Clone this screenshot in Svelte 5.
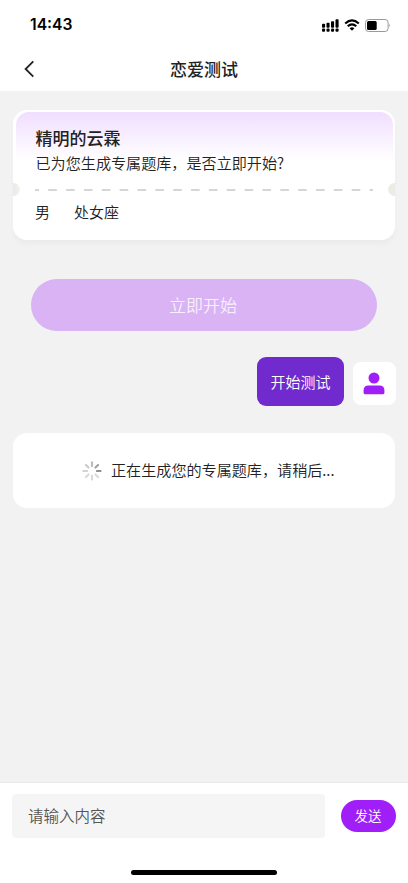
<script lang="ts">
  const title = '恋爱测试'
  const profile = { name: '精明的云霖', gender: '男', sign: '处女座' }
  const ticks = [0.3, 0.42, 0.5, 0.17, 0.17, 0.17, 0.2, 0.24]
  const bars = [4, 5, 6.5, 8.5]
  let message = $state('')
</script>

<div class="page">
  <header>
    <div class="status">
      <span class="time">14:43</span>
      <div class="indicators">
        <svg width="17" height="13" viewBox="0 0 17 13">
          {#each bars as bar, i}
            <rect x={i * 4.5} y={8.7 - bar} width="3.1" height={bar} rx=".9" />
            <rect x={i * 4.5} y="9.6" width="3.1" height="3.1" rx="1" />
          {/each}
        </svg>
        <svg class="wifi" width="16" height="12" viewBox="0 0 16 12">
          <path d="M1.2 4.5Q8 -1.6 14.8 4.5M3.7 7.3Q8 3.5 12.3 7.3" fill="none" stroke="#000" stroke-width="2.1" />
          <path d="M5.6 9.3Q8 7.4 10.4 9.3L8 11.7Z" />
        </svg>
        <svg class="battery" width="26" height="13" viewBox="0 0 26 13">
          <rect x=".5" y=".5" width="22.6" height="12" rx="3" fill="none" stroke="#999" />
          <rect x="2" y="2" width="9.7" height="9" rx="1.5" />
          <path d="M24.2 4.6Q25.8 6.5 24.2 8.4Z" fill="#999" />
        </svg>
      </div>
    </div>
    <nav>
      <button class="back" aria-label="返回">
        <svg width="10" height="18" viewBox="0 0 10 18">
          <path d="M9.3 1.3L1.6 9L9.3 16.7" fill="none" stroke="#222" stroke-width="1.8" />
        </svg>
      </button>
      <h1>{title}</h1>
    </nav>
  </header>

  <main>
    <section class="card">
      <div class="intro">
        <h2>{profile.name}</h2>
        <p>已为您生成专属题库，是否立即开始?</p>
      </div>
      <div class="divider">
        <i class="notch"></i>
        <svg width="338" height="2" viewBox="0 0 338 2">
          <path d="M0 1H338" stroke="#d6d6d6" stroke-width="2" stroke-dasharray="8.6 9.25" stroke-dashoffset="4.6" />
        </svg>
        <i class="notch"></i>
      </div>
      <div class="traits">
        <span>{profile.gender}</span>
        <span>{profile.sign}</span>
      </div>
    </section>

    <button class="start" disabled>立即开始</button>

    <div class="reply">
      <div class="bubble">开始测试</div>
      <div class="avatar">
        <svg width="22" height="23" viewBox="0 0 22 23" fill="#a01ff8">
          <circle cx="11" cy="6" r="5.5" />
          <path d="M.6 18.2Q.6 13.4 5.5 13.4H16.5Q21.4 13.4 21.4 18.2V20.7Q21.4 22.3 19.8 22.3H2.2Q.6 22.3 .6 20.7Z" />
        </svg>
      </div>
    </div>

    <section class="loading">
      <svg width="20" height="20" viewBox="-10 -10 20 20">
        {#each ticks as tick, i}
          <path d="M0 -4.9V-8.6" stroke="#222" stroke-width="2.1" stroke-linecap="round" opacity={tick} transform="rotate({i * 45})" />
        {/each}
      </svg>
      <span>正在生成您的专属题库，请稍后...</span>
    </section>
  </main>

  <footer>
    <div class="compose">
      <input type="text" placeholder="请输入内容" bind:value={message}>
      <button class="send">发送</button>
    </div>
    <div class="home"></div>
  </footer>
</div>

<style>
  :global(body) {
    margin: 0;
  }
  .page {
    display: flex;
    flex-direction: column;
    height: 883px;
    overflow: hidden;
    background: #f2f2f2;
    color: #222;
    font: 350 15px/22px "Noto Sans CJK SC", sans-serif;
  }
  .page * {
    box-sizing: border-box;
  }
  button, input {
    border: 0;
    padding: 0;
    font-family: inherit;
    font-weight: inherit;
  }
  h1, h2, p {
    margin: 0;
  }
  svg {
    display: block;
    flex: none;
  }
  header {
    height: 91px;
    background: #fff;
  }
  .status {
    display: flex;
    align-items: center;
    justify-content: space-between;
    height: 48px;
    padding: 2px 17px 0 30px;
  }
  .time {
    color: #000;
    font: 600 15.7px/20px Inter, sans-serif;
  }
  .indicators {
    display: flex;
    align-items: center;
  }
  .wifi {
    margin: 0 5px;
  }
  nav {
    display: grid;
    grid-template-columns: 60px 1fr 60px;
    align-items: center;
    height: 42px;
  }
  .back {
    padding-left: 24px;
    background: none;
  }
  h1 {
    text-align: center;
    font-size: 17px;
    font-weight: 500;
  }
  main {
    flex: 1;
    display: flex;
    flex-direction: column;
    padding: 19px 12px 0 13px;
  }
  .card {
    height: 130px;
    margin-right: 1px;
    padding: 2px 2px 0 3px;
    overflow: hidden;
    border-radius: 14px;
    background: #fff;
    box-shadow: 0 5px 5px -1px #ebebeb;
  }
  .intro {
    height: 71px;
    padding: 13px 0 0 19.5px;
    border-radius: 13px 13px 0 0;
    background: linear-gradient(#f0defe, #fff 48px);
  }
  h2 {
    font-size: 17px;
    font-weight: 500;
    line-height: 25px;
  }
  p {
    font-size: 15.1px;
    line-height: 25px;
  }
  .divider {
    display: flex;
    align-items: center;
    justify-content: space-between;
    height: 13px;
    margin: 0 -8px 0 -9px;
  }
  .notch {
    width: 13px;
    height: 13px;
    border-radius: 50%;
    background: linear-gradient(90deg, #ecece6, #ecece6 60%, #f3f3ee);
  }
  .traits {
    display: flex;
    gap: 24px;
    padding: 5px 0 0 19px;
  }
  .start {
    height: 52px;
    margin: 39px 19px 0 18px;
    padding: 0 2px 1px 0;
    border-radius: 26px;
    background: #d9b3f4;
    color: #f8effd;
    font-size: 17px;
  }
  .reply {
    display: flex;
    align-items: center;
    justify-content: flex-end;
    gap: 9px;
    margin-top: 26px;
  }
  .bubble {
    width: 87px;
    height: 49px;
    border-radius: 9px;
    background: #712acd;
    color: #fff;
    line-height: 49px;
    text-align: center;
  }
  .avatar {
    display: grid;
    place-items: center;
    width: 43px;
    height: 43px;
    margin-top: 3px;
    padding-right: 1px;
    border-radius: 8px;
    background: #fff;
  }
  .loading {
    display: flex;
    align-items: center;
    gap: 9px;
    height: 75px;
    margin: 27px 1px 0 0;
    padding-left: 69px;
    border-radius: 14px;
    background: #fff;
    font-size: 15.1px;
  }
  .loading span {
    padding-bottom: 3px;
  }
  footer {
    height: 101px;
    border-top: 1px solid #e9e9e9;
    background: #fff;
  }
  .compose {
    display: flex;
    align-items: center;
    gap: 16px;
    padding: 11px 12px 0;
  }
  input {
    flex: 1;
    min-width: 0;
    height: 44px;
    padding: 0 0 2px 16px;
    border-radius: 4px;
    background: #f5f5f5;
    font-size: 15.5px;
  }
  input::placeholder {
    color: #555;
    opacity: 1;
  }
  .send {
    width: 55px;
    height: 32px;
    padding: 0 1px 2px 0;
    border-radius: 16px;
    background: #a01ff8;
    color: #fff;
    font-size: 13.5px;
  }
  .home {
    width: 146px;
    height: 5px;
    margin: 32px auto 0;
    border-radius: 3px;
    background: #000;
  }
</style>
